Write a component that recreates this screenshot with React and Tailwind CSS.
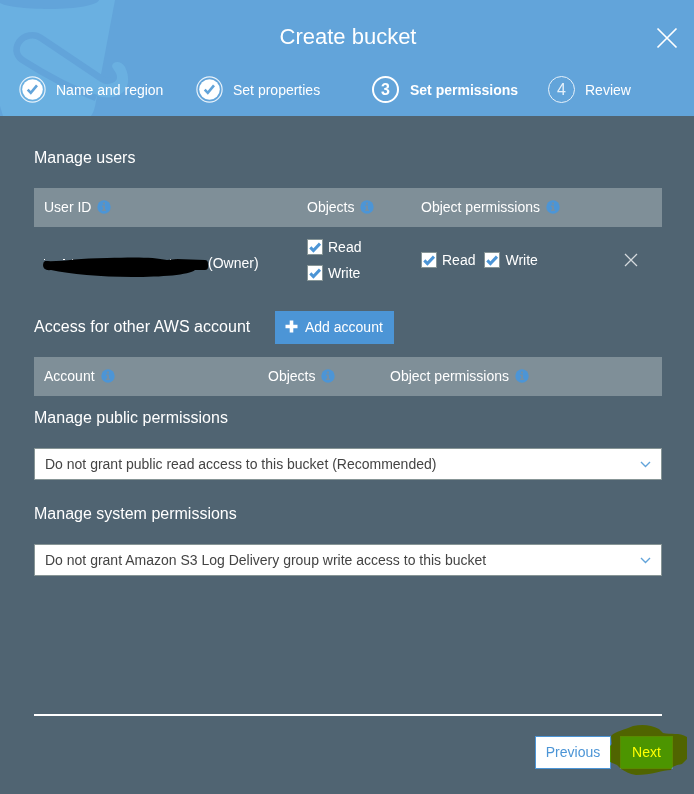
import React from "react";

function BucketArt() {
  return (
    <svg className="absolute left-0 top-0" width="140" height="116" viewBox="0 0 140 116" fill="none">
      <path d="M0 0H115L96 101C95 107 94 112 91 116H3L0 106Z" fill="#6ab0e1" />
      <path d="M0 0H99C98 5 76 9 50 9C25 9 4 6 0 3Z" fill="#62a4da" />
      <path
        d="M112 66C113 61 121 60 125 67C130 77 129 88 122 93C114 99 103 98 95 95L86 84L100 80C108 85 117 84 117 77C117 72 113 70 112 66Z"
        fill="#6ab0e1"
      />
      <path
        d="M112 79C110 81 106 82 102 79L41 38C34 33 24 35 19 42C14 50 17 57 24 61C46 75 70 88 96 98"
        stroke="#62a4da"
        strokeWidth="6.5"
      />
    </svg>
  );
}

function DoneMark() {
  return (
    <svg width="27" height="27" viewBox="0 0 27 27" fill="none" className="shrink-0">
      <circle cx="13.5" cy="13.5" r="12.6" stroke="#e6f1fa" strokeWidth="1.2" />
      <circle cx="13.5" cy="13.5" r="10.3" fill="white" />
      <path d="M8.7 13.6L11.8 16.8L18 9.4" stroke="#62a4da" strokeWidth="2.6" />
    </svg>
  );
}

function NumberMark({ n, active }) {
  return (
    <span
      className={
        "flex h-[27px] w-[27px] shrink-0 items-center justify-center rounded-full text-[16px] leading-none " +
        (active ? "border-2 border-white font-bold" : "border border-[#e6f1fa] text-[#e6f1fa]")
      }
    >
      {n}
    </span>
  );
}

function Step({ mark, label, width, bold }) {
  return (
    <div className={"flex items-center gap-[10px] " + width}>
      {mark}
      <span className={bold ? "ml-px font-bold" : ""}>{label}</span>
    </div>
  );
}

function InfoIcon() {
  return (
    <svg width="14" height="14" viewBox="0 0 14 14">
      <circle cx="7" cy="7" r="6.7" fill="#4c95d6" />
      <path d="M5.9 2.6H8V4.5H5.9ZM5 5.6H8V9.6H9V11H5V9.6H6V7H5Z" fill="#7f8f98" fillOpacity="0.75" />
    </svg>
  );
}

function Cell({ label, width }) {
  return (
    <div className={"flex items-center gap-[6px] " + width}>
      <span>{label}</span>
      <InfoIcon />
    </div>
  );
}

function Check({ label }) {
  return (
    <label className="flex h-[26px] items-center gap-[5px]">
      <span className="flex h-4 w-4 items-center justify-center border border-[#879596] bg-white">
        <svg width="14" height="14" viewBox="0 0 14 14" fill="none">
          <path d="M2.3 7.4L5.4 10.5L12 3.6" stroke="#4c95d6" strokeWidth="3" />
        </svg>
      </span>
      {label}
    </label>
  );
}

function Select({ value }) {
  return (
    <div className="flex h-8 items-center justify-between border border-[#879596] bg-white pl-[10px] pr-[10px] text-[#444]">
      <span>{value}</span>
      <svg width="11" height="7" viewBox="0 0 11 7" fill="none">
        <path d="M1 1L5.5 5.4L10 1" stroke="#62a4da" strokeWidth="1.4" />
      </svg>
    </div>
  );
}

export default function App() {
  return (
    <div className="flex h-[794px] w-[694px] flex-col overflow-hidden bg-[#506472] font-['Liberation_Sans',Arial,sans-serif] text-[14px] leading-5 text-white">
      <header className="relative h-[116px] bg-[#62a4da]">
        <BucketArt />
        <div className="relative flex h-[76px] items-center justify-center">
          <h1 className="mb-[2px] ml-[2px] text-[22px] leading-7">Create bucket</h1>
          <svg className="absolute right-[16px] top-[27px]" width="22" height="22" viewBox="0 0 22 22" fill="none">
            <path d="M1.5 1.5L20.5 20.5M20.5 1.5L1.5 20.5" stroke="white" strokeWidth="1.7" />
          </svg>
        </div>
        <div className="relative flex h-[27px] items-center pl-[19px]">
          <Step width="w-[177px]" mark={<DoneMark />} label="Name and region" />
          <Step width="w-[176px]" mark={<DoneMark />} label="Set properties" />
          <Step width="w-[176px]" mark={<NumberMark n="3" active />} label="Set permissions" bold />
          <Step width="w-[120px]" mark={<NumberMark n="4" />} label="Review" />
        </div>
      </header>

      <main className="flex flex-col pl-[34px] pr-8">
        <h2 className="mt-[32px] text-[16px] leading-5">Manage users</h2>
        <div className="mt-[20px] flex h-[39px] items-center bg-[#7f8f98] pb-[2px] pl-[10px]">
          <Cell label="User ID" width="w-[263px]" />
          <Cell label="Objects" width="w-[114px]" />
          <Cell label="Object permissions" width="w-[160px]" />
        </div>
        <div className="flex h-[67px] items-center pb-[2px] pl-[8px]">
          <div className="flex w-[265px] items-center pt-[7px]">
            <svg className="mt-2" width="166" height="22" viewBox="0 0 166 22">
              <path d="M2 3.5h1M21 3.5h2M30 3.5h1M42 3.5h2M49 3.5h1M128 3.5h1M134 3.5h2" stroke="#fff" strokeWidth="1" />
              <path d="M3 5C20 6 35 2 65 2C92 1 112 1 125 4L135 3L163 4Q166 4 166 8V11Q166 14 163 14H153C147 19 120 21 90 21C58 21 28 18 9 14Q1 15 1 9Q1 6 3 5Z" fill="#000" />
            </svg>
            <span>(Owner)</span>
          </div>
          <div className="w-[114px]">
            <Check label="Read" />
            <Check label="Write" />
          </div>
          <div className="flex w-[203px] gap-[9px]">
            <Check label="Read" />
            <Check label="Write" />
          </div>
          <svg width="14" height="14" viewBox="0 0 14 14" fill="none">
            <path d="M1 1L13 13M13 1L1 13" stroke="#d5dadd" strokeWidth="1.3" />
          </svg>
        </div>
        <div className="mt-[17px] flex h-[33px] items-center">
          <h2 className="mb-[2px] w-[241px] text-[16px] tracking-[0.03px]">Access for other AWS account</h2>
          <button className="flex h-[33px] w-[119px] items-center gap-[7px] bg-[#4c95d6] pb-[2px] pl-[10px]">
            <svg width="13" height="13" viewBox="0 0 13 13">
              <path d="M6.5 0.5V12.5M0.5 6.5H12.5" stroke="white" strokeWidth="3.6" />
            </svg>
            Add account
          </button>
        </div>
        <div className="mt-[13px] flex h-[39px] items-center bg-[#7f8f98] pb-[2px] pl-[10px]">
          <Cell label="Account" width="w-[224px]" />
          <Cell label="Objects" width="w-[122px]" />
          <Cell label="Object permissions" width="w-[160px]" />
        </div>
        <h2 className="mb-[20px] mt-[12px] text-[16px]">Manage public permissions</h2>
        <Select value="Do not grant public read access to this bucket (Recommended)" />
        <h2 className="mb-[20px] mt-[24px] text-[16px]">Manage system permissions</h2>
        <Select value="Do not grant Amazon S3 Log Delivery group write access to this bucket" />
      </main>

      <footer className="ml-[34px] mr-8 mt-[138px] border-t-2 border-white">
        <div className="relative mr-[-12px] mt-5 flex h-[33px] gap-[9px] pl-[501px]">
          <button className="h-[33px] w-[76px] border border-[#4c95d6] bg-white pb-[2px] text-[#4c95d6]">Previous</button>
          <button className="h-[33px] w-[53px] border border-[#5a89b8] bg-[#4c95d6] pb-[2px]">Next</button>
          <svg className="absolute left-[575px] top-[-12px] mix-blend-multiply" width="80" height="52" viewBox="0 0 80 52">
            <path d="M2 12C6 7 16 6 24 2C34 0 42 1 50 5L54 9C62 11 70 8 78 13V35L73 40C68 41 63 42 62 46C54 46 43 51 27 51C20 50 16 47 12 45L8 41L1 38V22L3 20Z" fill="#ffff00" />
          </svg>
        </div>
      </footer>
    </div>
  );
}
